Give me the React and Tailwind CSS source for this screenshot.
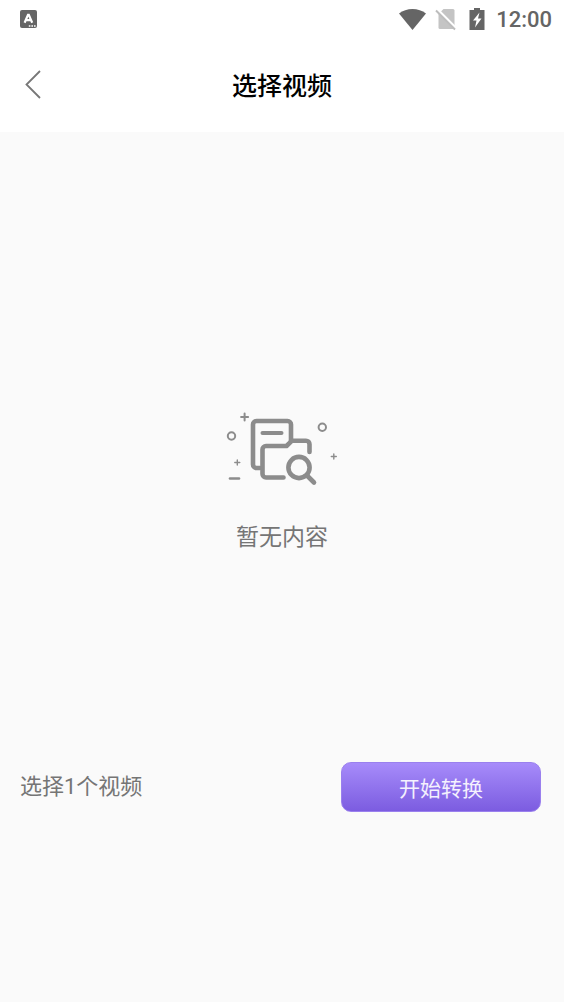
function StatusBar() {
  return (
    <div className="flex h-[38px] items-center justify-between pl-5 pr-3 text-[#656565]">
      <svg width="17" height="20" viewBox="0 0 17 20" aria-hidden="true">
        <rect x="0" y="1" width="17" height="18" rx="2" fill="currentColor" />
        <path d="M4.600 13.800 8 5.800h.8l3.400 8M6 11.200h4.800" fill="none" stroke="#fff" strokeWidth="2.200" />
        <path d="M8.800 17h1.600M11.400 17h1.600M14 17h1.600" stroke="#fff" strokeWidth="1.500" />
      </svg>
      <div className="flex items-center pt-0.5">
        <svg width="28" height="24" viewBox="0 0 28 24" aria-hidden="true">
          <path d="M0 5.400C3.700 2.600 8.500 1 13.500 1s9.800 1.600 13.500 4.400L13.500 22z" fill="currentColor" />
        </svg>
        <svg className="ml-2" width="22" height="24" viewBox="0 0 22 24" aria-hidden="true">
          <path d="M8.500 1H18a1.500 1.500 0 0 1 1.500 1.500V21H5A1.500 1.500 0 0 1 3.500 19.500V6z" fill="#c4c4c4" />
          <path d="M1.500 .5 21.500 20.500" stroke="#fff" strokeWidth="2.600" />
          <path d="M1 2.500 20 21.500" stroke="#bdbdbd" strokeWidth="1.900" />
        </svg>
        <svg className="ml-3" width="16" height="24" viewBox="0 0 16 24" aria-hidden="true">
          <path d="M5 0h6v2H15.500v20H.5V2H5z" fill="currentColor" />
          <path d="M10.500 4.500 4 12.500h3.500L6 19.500 12.500 10.500H9z" fill="#fff" />
        </svg>
        <time className="ml-[11px] font-['Roboto',sans-serif] text-[22px] leading-6 font-medium">12:00</time>
      </div>
    </div>
  );
}

function TopBar() {
  return (
    <div className="grid h-[92px] grid-cols-[64px_1fr_64px] items-center">
      <button type="button" aria-label="返回" className="flex h-16 items-center pl-6">
        <svg width="18" height="30" viewBox="0 0 18 30" fill="none" stroke="#777" strokeWidth="1.800" aria-hidden="true">
          <path d="M16 2 2.500 15.500 16 29" />
        </svg>
      </button>
      <h1 className="text-center text-[25px] leading-9 font-medium text-black">选择视频</h1>
    </div>
  );
}

function EmptyIcon() {
  return (
    <svg width="124" height="90" viewBox="0 0 124 90" fill="none" stroke="#8c8c8c" strokeLinecap="round" strokeLinejoin="round" aria-hidden="true">
      <g strokeWidth="4.600">
        <path d="M40 63H36.500a3.500 3.500 0 0 1-3.500-3.500V19.500a3.500 3.500 0 0 1 3.500-3.500H67.500a3.500 3.500 0 0 1 3.500 3.500V36" />
        <path d="M63.500 72.500H46a3.500 3.500 0 0 1-3.500-3.500V44.500A3.500 3.500 0 0 1 46 41H66.500L72 35.700H86a3.500 3.500 0 0 1 3.500 3.500V47" />
        <path d="M42.500 28H61.500" strokeWidth="4" />
        <circle cx="79" cy="62.500" r="10.600" />
        <path d="M87 70.500 94 77.500" />
      </g>
      <circle cx="11.500" cy="31" r="3.700" strokeWidth="2" />
      <circle cx="102.300" cy="22.300" r="3.700" strokeWidth="2" />
      <path d="M10 73.500h9" strokeWidth="2.600" />
      <path d="M24.600 8.500v7M21.100 12h7" strokeWidth="2" />
      <path d="M17.300 55v5M14.800 57.500h5M113.800 49v5M111.300 51.500h5" strokeWidth="1.400" />
    </svg>
  );
}

export default function App() {
  return (
    <div className="flex min-h-screen flex-col bg-[#fafafa] font-['Noto_Sans_CJK_SC',sans-serif]">
      <header className="bg-white pb-0.5">
        <StatusBar />
        <TopBar />
      </header>
      <main className="flex flex-1 flex-col items-center justify-center gap-6 pt-[62px]">
        <EmptyIcon />
        <p className="text-[23px] leading-8 text-[#757575]">暂无内容</p>
      </main>
      <footer className="flex items-center justify-between pr-[23px] pb-[190px] pl-5">
        <p className="font-['Roboto','Noto_Sans_CJK_SC',sans-serif] text-[22px] leading-8 text-[#757575]">选择1个视频</p>
        <button
          type="button"
          className="h-[50px] w-[200px] rounded-[10px] border border-[#9a80ee] bg-linear-to-b from-[#a78bfa] to-[#7c5ce0] text-[21px] leading-8 text-white/90"
        >
          开始转换
        </button>
      </footer>
    </div>
  );
}
